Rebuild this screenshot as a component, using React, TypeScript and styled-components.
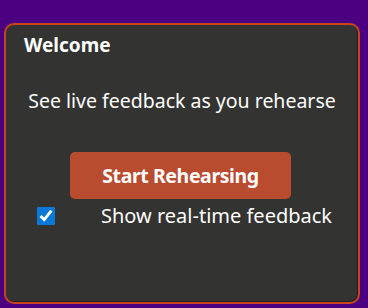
import React from "react";
import styled, { createGlobalStyle } from "styled-components";

const Global = createGlobalStyle`
  html, body { margin: 0; padding: 0; }
  body {
    background: #4b0082;
    font-family: "Noto Sans", "Open Sans", sans-serif;
    width: 368px;
    height: 308px;
    overflow: hidden;
  }
`;

const Page = styled.div`
  padding: 23px 8px 4px 4px;
  box-sizing: border-box;
  height: 308px;
`;

const Card = styled.div`
  box-sizing: border-box;
  height: 281px;
  border: 2px solid #c9441d;
  border-radius: 10px;
  background: #333331;
  box-shadow: inset -1px -1px 0 #1f1f1f;
  color: #ffffff;
  display: flex;
  flex-direction: column;
  padding: 8px 18px 0 18px;
`;

const Title = styled.h3`
  margin: 0;
  font-size: 19px;
  font-weight: 700;
  line-height: 24px;
`;

const Lead = styled.p`
  margin: 32px -10px 0;
  font-size: 19.5px;
  line-height: 24px;
  text-align: center;
  white-space: nowrap;
`;

const StartButton = styled.button`
  align-self: flex-start;
  margin: 39px 0 0 46px;
  width: 221px;
  height: 47px;
  border: none;
  border-radius: 5px;
  background: #b94b2f;
  color: #ffffff;
  font-family: inherit;
  font-size: 19.5px;
  letter-spacing: -0.4px;
  font-weight: 700;
  cursor: pointer;
`;

const OptionRow = styled.label`
  display: flex;
  align-items: center;
  margin-top: 7px;
  padding-left: 13px;
  font-size: 20px;
  line-height: 20px;
  white-space: nowrap;
`;

const Check = styled.input`
  width: 18px;
  height: 18px;
  margin: 0 46px 0 0;
  accent-color: #0a78d6;
`;

export default function App() {
  return (
    <>
      <Global />
      <Page>
        <Card>
          <Title>Welcome</Title>
          <Lead>See live feedback as you rehearse</Lead>
          <StartButton>Start Rehearsing</StartButton>
          <OptionRow>
            <Check type="checkbox" defaultChecked />
            <span>Show real-time feedback</span>
          </OptionRow>
        </Card>
      </Page>
    </>
  );
}
